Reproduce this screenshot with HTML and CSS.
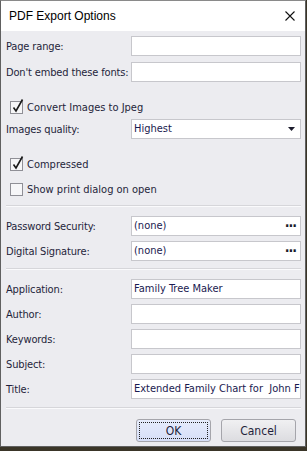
FILE: index.html
```html
<!DOCTYPE html>
<html lang="en">
<head>
    <meta charset="UTF-8">
    <meta name="viewport" content="width=device-width, initial-scale=1.0">
    <title>PDF Export Options</title>
    <link rel="stylesheet" href="styles.css">
</head>
<body>
    <div class="window">
        <div class="titlebar">
            <span class="title">PDF Export Options</span>
            <svg class="close" width="10" height="10" viewBox="0 0 10 10">
                <path d="M0.5 0.5 L9.5 9.5 M9.5 0.5 L0.5 9.5" stroke="#111" stroke-width="1.1" fill="none"/>
            </svg>
        </div>

        <div class="content">
            <div class="row first">
                <label class="label">Page range:</label>
                <div class="field"></div>
            </div>
            <div class="row gap6">
                <label class="label">Don't embed these fonts:</label>
                <div class="field"></div>
            </div>

            <div class="check-row gap16">
                <span class="box">
                    <svg width="13" height="16" viewBox="0 0 13 16"><path d="M2.5 9.5 L5 13 L11.5 1.5" stroke="#1a1a1a" stroke-width="1.6" fill="none"/></svg>
                </span>
                <span class="check-text">Convert Images to Jpeg</span>
            </div>
            <div class="row gap2">
                <label class="label">Images quality:</label>
                <div class="field combo">
                    <span>Highest</span>
                    <svg class="arrow" width="7" height="4" viewBox="0 0 7 4"><path d="M0 0 H7 L3.5 4 Z" fill="#1c1c2c"/></svg>
                </div>
            </div>

            <div class="check-row gap16">
                <span class="box">
                    <svg width="13" height="16" viewBox="0 0 13 16"><path d="M2.5 9.5 L5 13 L11.5 1.5" stroke="#1a1a1a" stroke-width="1.6" fill="none"/></svg>
                </span>
                <span class="check-text">Compressed</span>
            </div>
            <div class="check-row gap6">
                <span class="box"></span>
                <span class="check-text">Show print dialog on open</span>
            </div>

            <div class="separator gap6"></div>

            <div class="row gap9">
                <label class="label">Password Security:</label>
                <div class="field combo">
                    <span>(none)</span>
                    <span class="dots">&middot;&middot;&middot;</span>
                </div>
            </div>
            <div class="row gap5">
                <label class="label">Digital Signature:</label>
                <div class="field combo">
                    <span>(none)</span>
                    <span class="dots">&middot;&middot;&middot;</span>
                </div>
            </div>

            <div class="separator gap7"></div>

            <div class="row gap9">
                <label class="label">Application:</label>
                <div class="field">Family Tree Maker</div>
            </div>
            <div class="row gap5">
                <label class="label">Author:</label>
                <div class="field"></div>
            </div>
            <div class="row gap5">
                <label class="label">Keywords:</label>
                <div class="field"></div>
            </div>
            <div class="row gap5">
                <label class="label">Subject:</label>
                <div class="field"></div>
            </div>
            <div class="row gap5">
                <label class="label">Title:</label>
                <div class="field">Extended Family Chart for&nbsp; John F</div>
            </div>

            <div class="separator gap8"></div>

            <div class="buttons">
                <button class="btn ok"><span class="focus">OK</span></button>
                <button class="btn">Cancel</button>
            </div>
        </div>
    </div>
</body>
</html>
```

FILE: styles.css
```css
html, body { margin: 0; padding: 0; }
body { background: #3a3528; font-family: "DejaVu Sans Condensed", "DejaVu Sans", sans-serif; font-size: 11px; color: #1f1f3a; }

.window { width: 304px; height: 445px; border: 1px solid #606060; border-top-color: #8a8a8a; background: #ececf0; }
.titlebar { height: 30px; background: #fff; display: flex; align-items: center; justify-content: space-between; padding: 0 10px 0 8px; }
.title { font-family: "Liberation Sans", Arial, sans-serif; font-size: 12px; color: #000; }
.close { display: block; }

.content { padding: 0 4px 0 5px; }
.row { display: flex; align-items: center; height: 20px; }
.label { width: 125px; white-space: nowrap; letter-spacing: -0.15px; }
.field { flex: 1; height: 18px; background: #fff; border: 1px solid #c7c7cc; line-height: 18px; padding: 0 0 0 2px; overflow: hidden; white-space: nowrap; color: #1a1a50; }
.combo { display: flex; align-items: center; justify-content: space-between; padding-right: 3px; }
.arrow { margin-right: 2px; }
.dots { font-weight: bold; font-size: 14px; letter-spacing: -1px; color: #1c1c2c; margin-right: 1px; }

.check-row { display: flex; align-items: center; height: 19px; padding-left: 4px; }
.box { position: relative; width: 11px; height: 11px; border: 1px solid #8f8f96; background: #f6f6f8; margin-right: 4px; }
.box svg { position: absolute; left: 0; top: -4px; }

.separator { height: 0; border-top: 1px solid #d6d6da; border-bottom: 1px solid #fafafc; }

.first { margin-top: 5px; }
.gap2 { margin-top: 2px; }
.gap5 { margin-top: 5px; }
.gap6 { margin-top: 6px; }
.gap7 { margin-top: 7px; }
.gap8 { margin-top: 8px; }
.gap9 { margin-top: 9px; }
.gap16 { margin-top: 16px; }

.buttons { display: flex; justify-content: flex-end; gap: 10px; margin-top: 10px; padding-right: 5px; }
.btn { width: 75px; height: 23px; border: 1px solid #a5a5ab; border-radius: 3px; background: linear-gradient(#f0f0f2, #dcdce0); font-family: "DejaVu Sans Condensed", "DejaVu Sans", sans-serif; font-size: 12px; color: #1f1f3a; padding: 0; }
.ok { background: linear-gradient(#e6ecfc, #d6def7); display: flex; padding: 2px; }
.focus { flex: 1; border: 1px dotted #222; display: flex; align-items: center; justify-content: center; }
```
